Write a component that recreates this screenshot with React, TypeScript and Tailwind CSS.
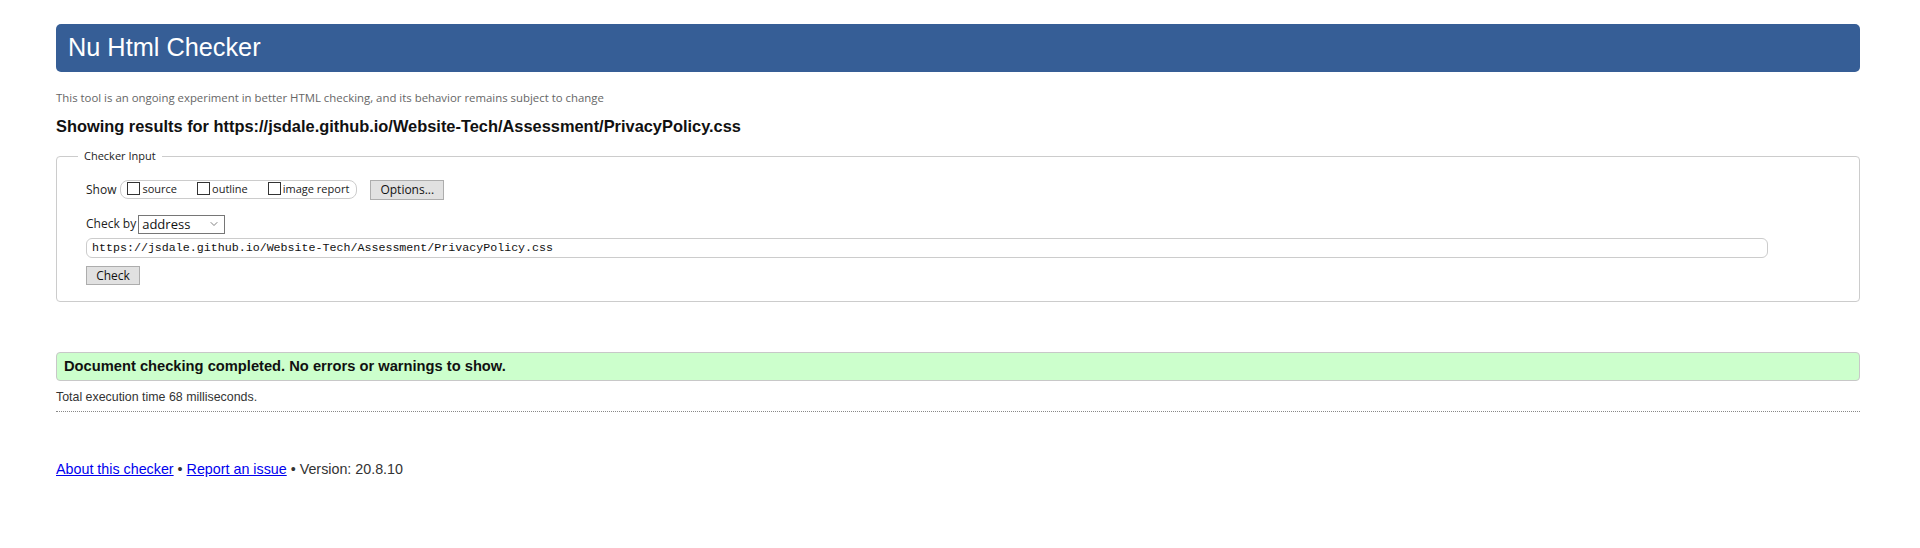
import { ChevronDown } from 'lucide-react';

const ui = { fontFamily: '"Open Sans", "Noto Sans", sans-serif' };
const arial = { fontFamily: '"Liberation Sans", Arial, sans-serif' };

const Check = ({ label }: { label: string }) => (
    <label className="flex items-center gap-[2px]">
        <span className="inline-block h-[13px] w-[13px] -translate-y-[1px] border border-[#333] bg-white" />
        <span className="text-[11px] text-[#222]">{label}</span>
    </label>
);

export default function App() {
    return (
        <div className="min-h-[548px] bg-white pl-[56px] pr-[60px] pt-[24px] text-[#222]" style={arial}>
            <header className="flex h-[48px] items-center rounded-[5px] bg-[#365e96] px-[12px]">
                <h1 className="text-[25.3px] leading-none text-white">Nu Html Checker</h1>
            </header>

            <p className="mt-[19px] text-[11.4px] leading-[14px] text-[#666]" style={ui}>
                This tool is an ongoing experiment in better HTML checking, and its behavior remains subject to change
            </p>
            <h2 className="mt-[12px] text-[16.4px] font-bold leading-[18px] text-[#111]">
                Showing results for https://jsdale.github.io/Website-Tech/Assessment/PrivacyPolicy.css
            </h2>

            <fieldset className="mt-[13px] h-[154px] rounded-[4px] border border-[#ccc] pl-[21px] pr-[29px] pb-[16px]" style={ui}>
                <legend className="px-[6px] text-[11px] text-[#222]">Checker Input</legend>

                <div className="pl-[8px]">
                    <div className="mt-[15px] flex items-center">
                        <span className="mr-[4px] text-[12px]">Show</span>
                        <div className="flex h-[19px] items-center gap-[20px] rounded-[8px] border border-[#ccc] pl-[6px] pr-[7px]">
                            <Check label="source" />
                            <Check label="outline" />
                            <Check label="image report" />
                        </div>
                        <button className="ml-[13px] h-[20px] w-[74px] border border-[#adadad] bg-[#e1e1e1] text-[12px] text-[#111]">
                            Options...
                        </button>
                    </div>

                    <div className="mt-[15px] flex items-center">
                        <span className="mr-[2px] text-[12px]">Check by</span>
                        <div className="flex h-[19px] w-[87px] items-center justify-between border border-[#767676] bg-white pl-[3px] pr-[4px]">
                            <span className="text-[13px] leading-none text-[#111]">address</span>
                            <ChevronDown className="size-[12px] text-[#555]" strokeWidth={1.5} />
                        </div>
                    </div>

                    <div
                        className="mt-[4px] flex h-[20px] w-[1682px] items-center rounded-[6px] border border-[#ccc] px-[5px] text-[11.65px] text-[#111]"
                        style={{ fontFamily: '"Liberation Mono", monospace' }}
                    >
                        https://jsdale.github.io/Website-Tech/Assessment/PrivacyPolicy.css
                    </div>

                    <button className="mt-[8px] h-[19px] w-[54px] border border-[#adadad] bg-[#e1e1e1] text-[12px] text-[#111]">
                        Check
                    </button>
                </div>
            </fieldset>

            <div className="mt-[50px] flex h-[29px] items-center rounded-[4px] border border-[#c8c8c8] bg-[#ccffcc] px-[7px]">
                <p className="text-[14.7px] font-bold text-[#111]">Document checking completed. No errors or warnings to show.</p>
            </div>
            <p className="mt-[9px] text-[12.4px] leading-[15px] text-[#333]">Total execution time 68 milliseconds.</p>
            <hr className="mt-[6px] border-0 border-t border-dotted border-[#888]" />

            <footer className="mt-[47px] text-[14.3px] text-[#333]">
                <a href="#" className="text-[#00e] underline">
                    About this checker
                </a>
                {' • '}
                <a href="#" className="text-[#00e] underline">
                    Report an issue
                </a>
                {' • Version: 20.8.10'}
            </footer>
        </div>
    );
}
